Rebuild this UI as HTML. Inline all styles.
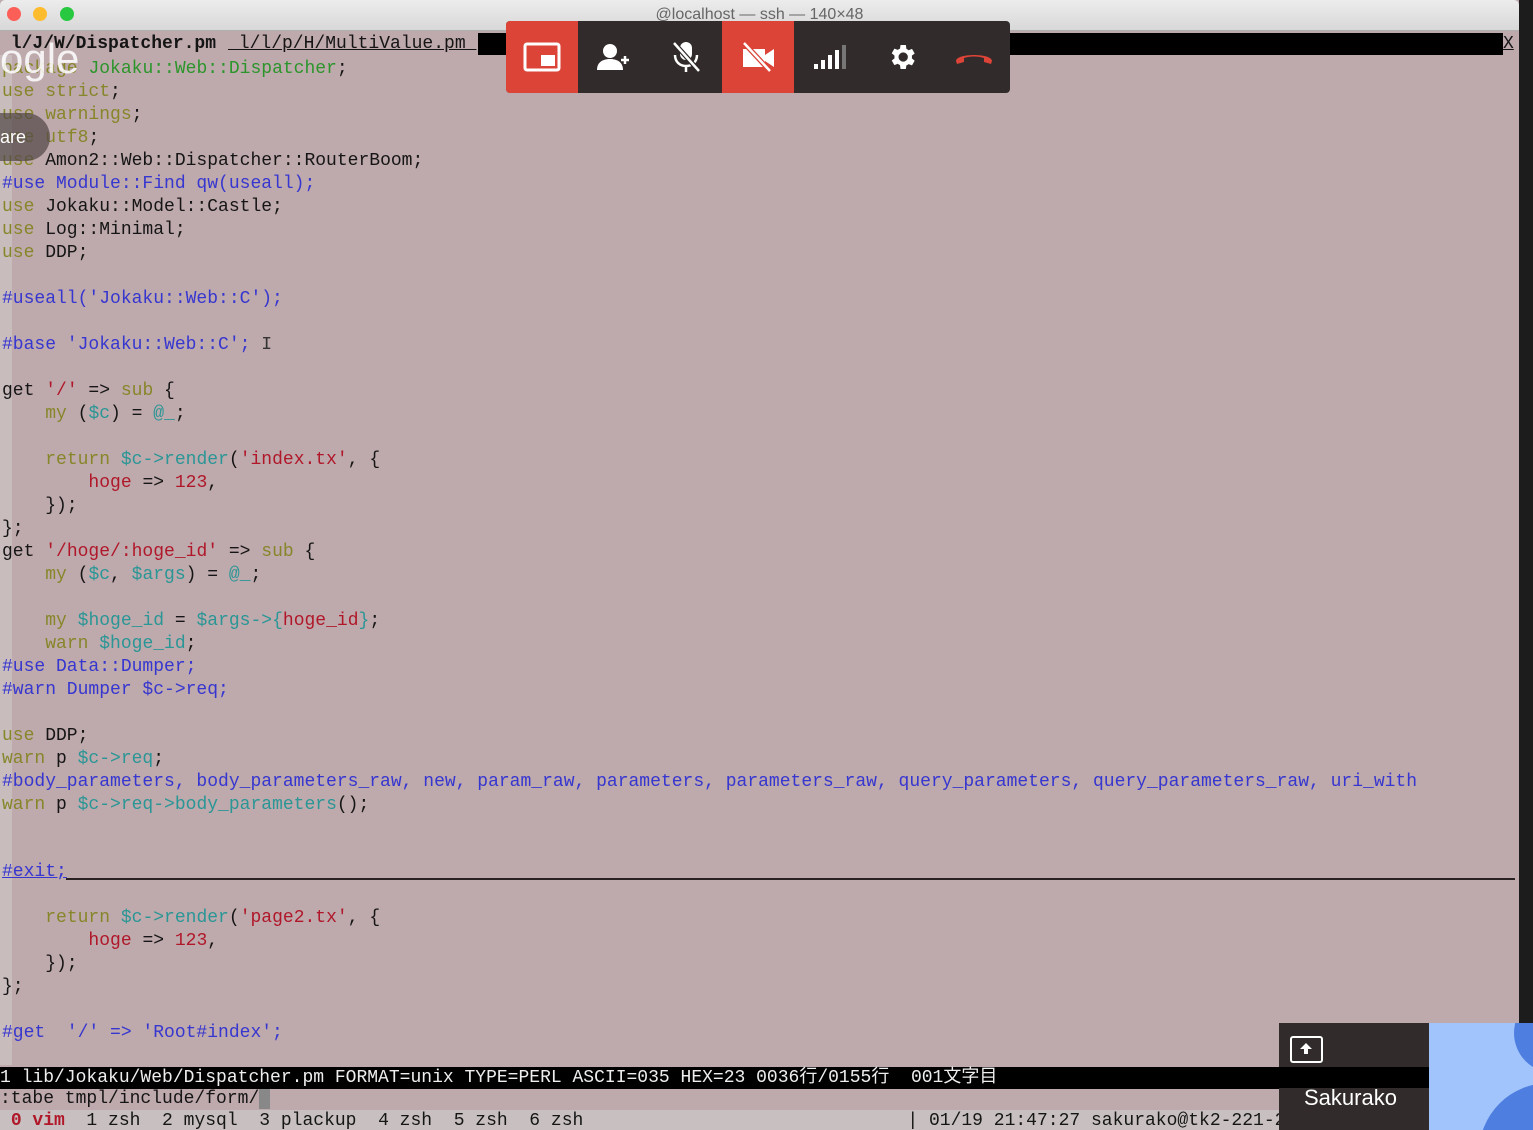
<!DOCTYPE html>
<html><head><meta charset="utf-8"><style>
*{margin:0;padding:0;box-sizing:border-box}
body{width:1533px;height:1130px;overflow:hidden;background:#bea9ac;position:relative;font-family:"Liberation Mono","Noto Sans CJK JP",monospace;font-size:18px;color:#151515}
.title{position:absolute;left:0;top:0;width:1519px;height:31px;background:linear-gradient(#ececec,#d8d8d8);border-bottom:1px solid #b0b0b0;border-radius:5px 5px 0 0;font-family:"Liberation Sans",sans-serif;font-size:16px;color:#666;text-align:center;line-height:30px}
.dot{position:absolute;top:7px;width:14px;height:14px;border-radius:50%}
.rstrip{position:absolute;left:1519px;top:0;width:14px;height:1130px;background:#1c1c1c}
.gut{position:absolute;left:0;top:55px;width:12px;height:1010px;background:#c9bcbd}
.l{position:absolute;left:2px;height:23px;line-height:23px;white-space:pre}
.code{position:absolute;left:0;top:2px;width:1519px;height:1060px}
.k{color:#86862a}.g{color:#2b952b}.c{color:#3636d0}.t{color:#2a9696}.r{color:#b0182a}
.tab{position:absolute;top:33px;left:0;width:1503px;height:22px;background:#000}
.bar{position:absolute;background:#312b2b;top:21px;left:506px;width:504px;height:72px;border-radius:4px;overflow:hidden}
.btn{position:absolute;top:0;width:72px;height:72px;display:flex;align-items:center;justify-content:center}
</style></head><body>
<div class="title">@localhost — ssh — 140×48</div>
<div class="dot" style="left:7px;background:#fc5f57"></div>
<div class="dot" style="left:33px;background:#fdbc2e"></div>
<div class="dot" style="left:60px;background:#28c840"></div>
<div class="tab"></div>
<div class="l" style="top:33px;left:0;width:228px;background:#bea9ac;font-weight:bold"> l/J/W/Dispatcher.pm </div>
<div class="l" style="top:33px;left:228px;width:250px;background:#bea9ac;text-decoration:underline"> l/l/p/H/MultiValue.pm </div>
<div class="l" style="top:33px;left:1503px;width:16px;background:#bea9ac;text-decoration:underline">X</div>
<div class="gut"></div>
<div class="code">
<div class="l" style="top:56px"><span class="k">package</span> <span class="g">Jokaku::Web::Dispatcher</span>;</div>
<div class="l" style="top:79px"><span class="k">use</span> <span class="k">strict</span>;</div>
<div class="l" style="top:102px"><span class="k">use</span> <span class="k">warnings</span>;</div>
<div class="l" style="top:125px"><span class="k">use</span> <span class="k">utf8</span>;</div>
<div class="l" style="top:148px"><span class="k">use</span> Amon2::Web::Dispatcher::RouterBoom;</div>
<div class="l c" style="top:171px">#use Module::Find qw(useall);</div>
<div class="l" style="top:194px"><span class="k">use</span> Jokaku::Model::Castle;</div>
<div class="l" style="top:217px"><span class="k">use</span> Log::Minimal;</div>
<div class="l" style="top:240px"><span class="k">use</span> DDP;</div>
<div class="l c" style="top:286px">#useall('Jokaku::Web::C');</div>
<div class="l c" style="top:332px">#base 'Jokaku::Web::C'; <span style="color:#333">I</span></div>
<div class="l" style="top:378px">get <span class="r">'/'</span> =&gt; <span class="k">sub</span> {</div>
<div class="l" style="top:401px">    <span class="k">my</span> (<span class="t">$c</span>) = <span class="t">@_</span>;</div>
<div class="l" style="top:447px">    <span class="k">return</span> <span class="t">$c-&gt;render</span>(<span class="r">'index.tx'</span>, {</div>
<div class="l" style="top:470px">        <span class="r">hoge</span> =&gt; <span class="r">123</span>,</div>
<div class="l" style="top:493px">    });</div>
<div class="l" style="top:516px">};</div>
<div class="l" style="top:539px">get <span class="r">'/hoge/:hoge_id'</span> =&gt; <span class="k">sub</span> {</div>
<div class="l" style="top:562px">    <span class="k">my</span> (<span class="t">$c</span>, <span class="t">$args</span>) = <span class="t">@_</span>;</div>
<div class="l" style="top:608px">    <span class="k">my</span> <span class="t">$hoge_id</span> = <span class="t">$args-&gt;{</span><span class="r">hoge_id</span><span class="t">}</span>;</div>
<div class="l" style="top:631px">    <span class="k">warn</span> <span class="t">$hoge_id</span>;</div>
<div class="l c" style="top:654px">#use Data::Dumper;</div>
<div class="l c" style="top:677px">#warn Dumper $c-&gt;req;</div>
<div class="l" style="top:723px"><span class="k">use</span> DDP;</div>
<div class="l" style="top:746px"><span class="k">warn</span> p <span class="t">$c-&gt;req</span>;</div>
<div class="l c" style="top:769px">#body_parameters, body_parameters_raw, new, param_raw, parameters, parameters_raw, query_parameters, query_parameters_raw, uri_with</div>
<div class="l" style="top:792px"><span class="k">warn</span> p <span class="t">$c-&gt;req-&gt;body_parameters</span>();</div>
<div class="l c" style="top:859px;text-decoration:underline">#exit;</div>
<div style="position:absolute;left:66px;top:876px;width:1449px;height:2px;background:#2a2222"></div>
<div class="l" style="top:905px">    <span class="k">return</span> <span class="t">$c-&gt;render</span>(<span class="r">'page2.tx'</span>, {</div>
<div class="l" style="top:928px">        <span class="r">hoge</span> =&gt; <span class="r">123</span>,</div>
<div class="l" style="top:951px">    });</div>
<div class="l" style="top:974px">};</div>
<div class="l c" style="top:1020px">#get  '/' =&gt; 'Root#index';</div>
</div>
<div class="l" style="top:1067px;left:0;width:1519px;height:22px;line-height:22px;background:#000;color:#eee">1 lib/Jokaku/Web/Dispatcher.pm FORMAT=unix TYPE=PERL ASCII=035 HEX=23 0036行/0155行  001文字目</div>
<div class="l" style="top:1089px;left:0;height:21px;line-height:21px">:tabe tmpl/include/form/<span style="background:#888"> </span></div>
<div class="l" style="top:1110px;left:0;width:1519px;height:20px;line-height:22px;background:#c8c0c0;overflow:hidden"> <span style="color:#b0182a;font-weight:bold">0 vim</span>  1 zsh  2 mysql  3 plackup  4 zsh  5 zsh  6 zsh                              | 01/19 21:47:27 sakurako@tk2-221-20187 (0.09 0.</div>
<div class="rstrip"></div>
<div style="position:absolute;left:0;top:35px;font-family:'Liberation Sans',sans-serif;font-size:42px;color:rgba(255,255,255,.85);line-height:48px">ogle</div>
<div style="position:absolute;left:-40px;top:113px;width:90px;height:48px;border-radius:24px;background:rgba(80,70,70,.7);color:#fff;font-family:'Liberation Sans',sans-serif;font-size:18px;line-height:48px;padding-left:40px">are</div>
<div class="bar">
<div class="btn" style="left:0;background:#db4437"><svg width="38" height="30" viewBox="0 0 38 30"><rect x="2" y="2" width="34" height="26" fill="none" stroke="#fff" stroke-width="3" rx="2"/><rect x="18" y="13" width="14" height="11" fill="#fff"/></svg></div>
<div class="btn" style="left:72px"><svg width="34" height="30" viewBox="0 0 34 30"><circle cx="13" cy="9" r="7" fill="#fff"/><path d="M0 28c0-8 6-11 13-11s13 3 13 11z" fill="#fff"/><path d="M28 14v8M24 18h8" stroke="#fff" stroke-width="2.5"/></svg></div>
<div class="btn" style="left:144px"><svg width="30" height="34" viewBox="0 0 30 34"><rect x="9" y="2" width="12" height="18" rx="6" fill="#fff"/><path d="M4 15c0 7 5 11 11 11s11-4 11-11M15 26v6" stroke="#fff" stroke-width="2.5" fill="none"/><path d="M3 3l25 28" stroke="#312b2b" stroke-width="5"/><path d="M3 3l25 28" stroke="#fff" stroke-width="2.5"/></svg></div>
<div class="btn" style="left:216px;background:#db4437"><svg width="36" height="32" viewBox="0 0 36 32"><rect x="3" y="8" width="22" height="18" fill="#fff"/><path d="M25 14l9-6v18l-9-6z" fill="#fff"/><path d="M4 2l26 28" stroke="#db4437" stroke-width="5"/><path d="M4 2l26 28" stroke="#fff" stroke-width="2.5"/></svg></div>
<div class="btn" style="left:288px"><svg width="36" height="26" viewBox="0 0 36 26"><rect x="2" y="20" width="4" height="5" fill="#fff"/><rect x="9" y="16" width="4" height="9" fill="#fff"/><rect x="16" y="11" width="4" height="14" fill="#fff"/><rect x="23" y="6" width="4" height="19" fill="#fff"/><rect x="30" y="1" width="4" height="24" fill="#777"/></svg></div>
<div class="btn" style="left:360px"><svg width="32" height="32" viewBox="0 0 24 24"><path fill="#fff" d="M19.4 13a7.5 7.5 0 000-2l2.1-1.6-2-3.5-2.5 1a7 7 0 00-1.7-1L14.9 3h-4l-.4 2.7a7 7 0 00-1.7 1l-2.5-1-2 3.5L6.4 11a7.5 7.5 0 000 2l-2.1 1.6 2 3.5 2.5-1a7 7 0 001.7 1l.4 2.9h4l.4-2.7a7 7 0 001.7-1l2.5 1 2-3.5zM12.9 15.5a3.5 3.5 0 110-7 3.5 3.5 0 010 7z"/></svg></div>
<div class="btn" style="left:432px"><svg width="40" height="16" viewBox="0 0 40 16"><path d="M2 12c0-8 36-8 36 0l-1 3-7-2v-4c-6-2-14-2-20 0v4l-7 2z" fill="#db4437"/></svg></div>
</div>
<div style="position:absolute;left:1279px;top:1023px;width:150px;height:107px;background:#312b2b"></div>
<div style="position:absolute;left:1279px;top:1067px;width:150px;height:21px;background:#000"></div>
<div style="position:absolute;left:1290px;top:1036px;width:33px;height:27px;border:2px solid #fff;border-radius:3px"></div>
<svg style="position:absolute;left:1299px;top:1042px" width="14" height="14" viewBox="0 0 14 14"><path d="M7 1l6 6H9v5H5V7H1z" fill="#fff"/></svg>
<div style="position:absolute;left:1304px;top:1085px;font-family:'Liberation Sans',sans-serif;font-size:22px;color:#fff">Sakurako</div>
<div style="position:absolute;left:1429px;top:1023px;width:104px;height:107px;background:#a2c4fc;overflow:hidden"><div style="position:absolute;left:50px;top:60px;width:140px;height:140px;border-radius:50%;background:#4e7fe0"></div><div style="position:absolute;left:85px;top:-30px;width:80px;height:80px;border-radius:50%;background:#4e7fe0"></div></div>
</body></html>
